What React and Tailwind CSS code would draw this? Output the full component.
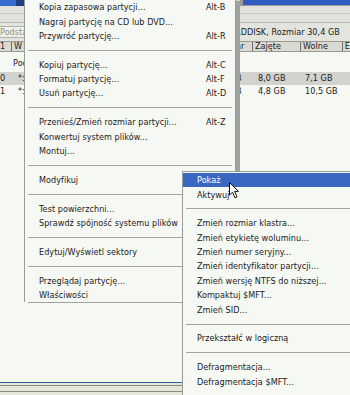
const mainItems = [
  ["Kopia zapasowa partycji...", "Alt-B"],
  ["Nagraj partycję na CD lub DVD..."],
  ["Przywróć partycję...", "Alt-R"],
  null,
  ["Kopiuj partycję...", "Alt-C"],
  ["Formatuj partycję...", "Alt-F"],
  ["Usuń partycję...", "Alt-D"],
  null,
  ["Przenieś/Zmień rozmiar partycji...", "Alt-Z"],
  ["Konwertuj system plików..."],
  ["Montuj..."],
  null,
  ["Modyfikuj"],
  null,
  ["Test powierzchni..."],
  ["Sprawdź spójność systemu plików"],
  null,
  ["Edytuj/Wyświetl sektory"],
  null,
  ["Przeglądaj partycję..."],
  ["Właściwości"],
];

const subItems = [
  "Pokaż",
  "Aktywuj",
  null,
  "Zmień rozmiar klastra...",
  "Zmień etykietę woluminu...",
  "Zmień numer seryjny...",
  "Zmień identyfikator partycji...",
  "Zmień wersję NTFS do niższej...",
  "Kompaktuj $MFT...",
  "Zmień SID...",
  null,
  "Przekształć w logiczną",
  null,
  "Defragmentacja...",
  "Defragmentacja $MFT...",
];

function Separator() {
  return (
    <div className="h-[14.4px] flex items-center px-[3px]">
      <div className="h-px w-full bg-[#a4a6a2]" />
    </div>
  );
}

function Cursor() {
  return (
    <svg className="absolute left-[229px] top-[182px]" width="11" height="17" viewBox="0 0 11 17">
      <path
        d="M0.5 0.5 L0.5 13 L3.5 10.2 L6 15.8 L8 14.9 L5.6 9.4 L9.5 9.4 Z"
        fill="#ffffff"
        stroke="#111111"
        strokeWidth="1"
        strokeLinejoin="round"
      />
    </svg>
  );
}

export default function App() {
  return (
    <div className="relative w-[350px] h-[395px] overflow-hidden bg-[#f6f8f4] text-[8.1px] tracking-[0.04px] leading-none text-[#1a1a1a] font-['DejaVu_Sans',sans-serif]">
      {/* application behind the menus */}
      <div className="flex flex-col h-full">
        <div className="flex h-[6px] bg-[#d6d6cf]">
          <div className="w-[16px] bg-[#3a6bd0]" />
          <div className="w-[8px] bg-[#1d3f80]" />
          <div className="w-[216px]" />
          <div className="flex-1 border-l-[3px] border-b border-[#9c9c96] bg-[#2e5cc0]" />
        </div>
        <div className="h-[17px] bg-[#e2e2dc] border-b border-[#b8b8b2] flex flex-col">
          <div className="h-[8px] border-b border-[#c8c8c2]" />
        </div>
        <div className="h-[18px] flex items-center bg-[#e4e4de]">
          <div className="w-[24px] h-[12px] flex items-center bg-[#eef0ec] border-y border-[#b0b0aa] overflow-hidden whitespace-nowrap text-[#8e8e8a]">
            Podsta
          </div>
          <div className="w-[211px]" />
          <div className="whitespace-nowrap">RDDISK, Rozmiar 30,4 GB</div>
        </div>
        <div className="h-[11px] flex bg-[#dadad2] border-y border-[#9a9a94]">
          <div className="w-[12px] border-r border-[#6e6e6a] flex items-center">1</div>
          <div className="w-[224px] border-r border-[#6e6e6a] flex items-center pl-[2px]">W</div>
          <div className="w-[17px] border-r border-[#6e6e6a] flex items-center">ar</div>
          <div className="w-[48px] border-r border-[#6e6e6a] flex items-center pl-[2px]">Zajęte</div>
          <div className="w-[42px] border-r border-[#6e6e6a] flex items-center pl-[2px]">Wolne</div>
          <div className="flex-1 flex items-center pl-[2px]">E</div>
        </div>
        <div className="flex-1 pt-[4px] bg-[#f6f8f4]">
          <div className="h-[14px] flex items-center">
            <div className="w-[12px]" />
            <div className="pl-[1px]">Pods</div>
          </div>
          <div className="mt-[2px] h-[13px] flex items-center bg-[#d2d2ce]">
            <div className="w-[12px]">0</div>
            <div className="w-[224px] pl-[6px]">*:</div>
            <div className="w-[17px]">B</div>
            <div className="w-[48px] pl-[5px]">8,0 GB</div>
            <div className="w-[42px] pl-[4px]">7,1 GB</div>
          </div>
          <div className="h-[13px] flex items-center">
            <div className="w-[12px]">1</div>
            <div className="w-[224px] pl-[6px]">*:</div>
            <div className="w-[17px]">B</div>
            <div className="w-[48px] pl-[5px]">4,8 GB</div>
            <div className="w-[42px] pl-[4px]">10,5 GB</div>
          </div>
        </div>
        <div className="h-[13px] bg-[#e6e6da] border-t border-[#2d5d9e] flex flex-col">
          <div className="h-[2px]" />
          <div className="h-[7px] border-y border-[#8a8a80]" />
        </div>
      </div>

      {/* main context menu */}
      <div className="absolute left-[24px] top-0 w-[212px] h-[302px] bg-[#f6f8f4] border-x border-[#9a9c98] shadow-[4px_1px_0_0_#a0a29e]">
        {mainItems.map((item, i) =>
          item === null ? (
            <Separator key={i} />
          ) : (
            <div key={i} className="h-[14.4px] flex items-center pl-[14px] whitespace-nowrap">
              <span className="w-[167px]">{item[0]}</span>
              {item[1] && <span>{item[1]}</span>}
            </div>
          )
        )}
      </div>

      {/* submenu */}
      <div className="absolute left-[182px] top-[171px] w-[172px] h-[230px] bg-[#f6f8f4] border-l border-t border-[#9a9c98] pt-px">
        {subItems.map((item, i) =>
          item === null ? (
            <Separator key={i} />
          ) : (
            <div
              key={i}
              className={
                i === 0
                  ? "h-[14.4px] flex items-center pl-[14px] whitespace-nowrap bg-[#3a66c4] text-white"
                  : "h-[14.4px] flex items-center pl-[14px] whitespace-nowrap"
              }
            >
              {item}
            </div>
          )
        )}
      </div>

      <Cursor />
    </div>
  );
}
